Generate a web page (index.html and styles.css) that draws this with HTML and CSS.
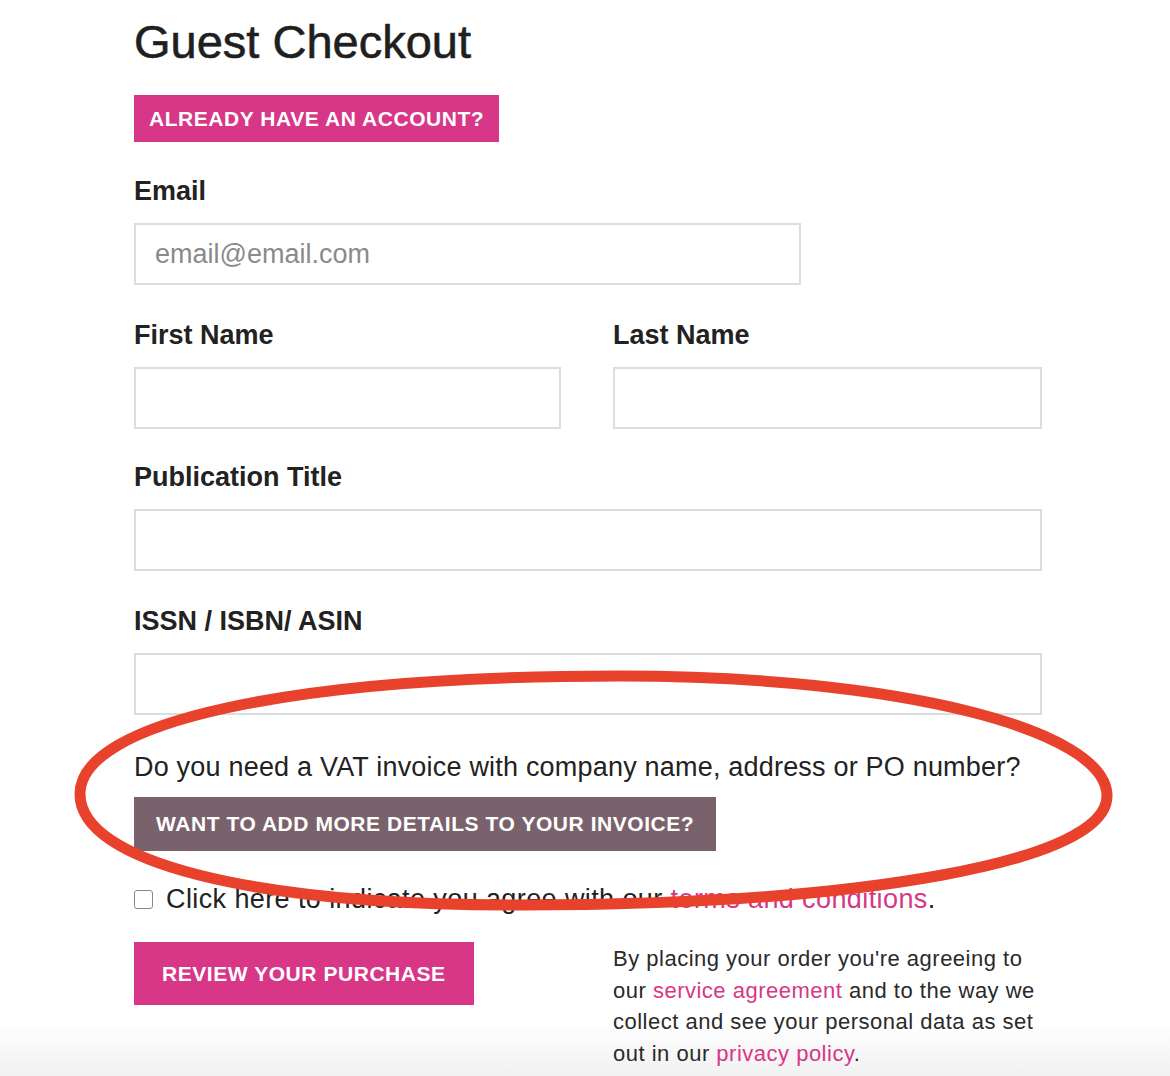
FILE: index.html
```html
<!DOCTYPE html>
<html lang="en">
<head>
    <meta charset="UTF-8">
    <meta name="viewport" content="width=device-width, initial-scale=1.0">
    <title>Guest Checkout</title>
    <link rel="stylesheet" href="styles.css">
</head>
<body>
    <div id="page">
        <h1 id="title">Guest Checkout</h1>
        <button class="btn btnPink" id="btnAccount">Already have an account?</button>

        <form id="checkout">
            <div class="field" id="fieldEmail">
                <label for="email">Email</label>
                <input id="email" type="email" placeholder="email@email.com">
            </div>
            <div class="twoCol">
                <div class="field">
                    <label for="firstName">First Name</label>
                    <input id="firstName" type="text">
                </div>
                <div class="field">
                    <label for="lastName">Last Name</label>
                    <input id="lastName" type="text">
                </div>
            </div>
            <div class="field" id="fieldPub">
                <label for="pubTitle">Publication Title</label>
                <input id="pubTitle" type="text">
            </div>
            <div class="field">
                <label for="issn">ISSN / ISBN/ ASIN</label>
                <input id="issn" type="text">
            </div>

            <p id="vatText">Do you need a VAT invoice with company name, address or PO number?</p>
            <button type="button" class="btn" id="btnInvoice">Want to add more details to your invoice?</button>

            <label id="agree"><input type="checkbox"><span>Click here to indicate you agree with our <a href="#">terms and conditions</a>.</span></label>

            <div class="twoCol" id="submitRow">
                <div><button type="button" class="btn btnPink" id="btnReview">Review your purchase</button></div>
                <p id="legal">By placing your order you're agreeing to our <a href="#">service agreement</a> and to the way we collect and see your personal data as set out in our <a href="#">privacy policy</a>.</p>
            </div>
        </form>

        <!-- red marker circle drawn over the invoice part -->
        <svg id="marker" viewBox="0 0 1170 1076" width="1170" height="1076">
            <path d="M 80 794 C 80 722, 290 676, 620 676 C 900 676, 1107 730, 1107 796 C 1107 862, 860 905, 520 905 C 250 905, 80 862, 80 794 Z" fill="none" stroke="#e8412c" stroke-width="11"/>
        </svg>
    </div>
</body>
</html>
```

FILE: styles.css
```css
html { background: linear-gradient(#fff 1022px, #f1f1f1 1076px); min-height: 1076px; }
body { margin: 0; font-family: "Liberation Sans", Arial, sans-serif; color: #222; }
#page { position: relative; width: 908px; margin-left: 134px; padding-top: 14px; }
#title {
    font-size: 47px; line-height: 56px; font-weight: normal; margin: 0 0 25px;
    color: #1f1f1f; -webkit-text-stroke: 0.6px #1f1f1f;
}

.btn {
    display: inline-block; border: none; color: #fff; cursor: pointer;
    font-family: inherit; font-weight: bold; font-size: 21px; letter-spacing: .55px;
    text-transform: uppercase; padding: 0;
}
.btnPink { background-color: #d83687; }
#btnAccount { height: 47px; padding: 0 15px; }
#btnInvoice { height: 54px; padding: 0 22px; background-color: #7a626c; }
#btnReview { height: 63px; padding: 0 28px; }

.field label { display: block; font-size: 27px; font-weight: bold; line-height: 32px; margin: 34px 0 16px; }
#fieldEmail label { margin-top: 33px; }
#fieldPub label { margin-top: 32px; }
.field input {
    display: block; width: 100%; height: 62px; box-sizing: border-box;
    border: 2px solid #dddddd; padding: 0 19px; margin: 0;
    font-family: inherit; font-size: 27px; color: #222; background: #fff;
}
#fieldEmail input { width: 667px; }
.field input::placeholder { color: #8a8a8a; }
.twoCol { display: grid; grid-template-columns: 427px 429px; column-gap: 52px; }

#vatText { font-size: 27px; letter-spacing: .2px; line-height: 32px; margin: 36px 0 14px; }

#agree { display: flex; align-items: center; font-size: 27px; letter-spacing: .4px; line-height: 32px; margin-top: 32px; }
#agree input {
    appearance: none; width: 19px; height: 19px; margin: 0 13px 0 0; flex: none;
    border: 1.5px solid #888; border-radius: 3px; background: #fff;
}
a { color: #d83687; text-decoration: none; }

#submitRow { margin-top: 27px; }
#legal { margin: 1px 0 0; font-size: 22px; letter-spacing: .5px; line-height: 31.5px; color: #2a2a2a; }

#marker { position: absolute; left: -134px; top: 0; pointer-events: none; }
```
